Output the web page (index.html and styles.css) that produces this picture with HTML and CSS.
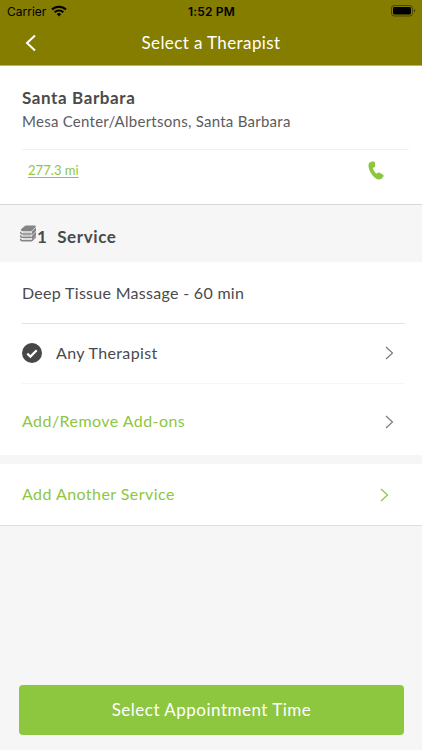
FILE: index.html
```html
<!DOCTYPE html>
<html lang="en">
<head>
  <meta charset="UTF-8">
  <meta name="viewport" content="width=device-width, initial-scale=1.0">
  <title>Select a Therapist</title>
  <link rel="stylesheet" href="styles.css">
</head>
<body>
  <header class="header">
    <div class="status-bar">
      <div class="carrier">
        <span class="carrier-name">Carrier</span>
        <svg class="wifi" width="16" height="12" viewBox="0 0 16 12" fill="none" stroke="#000" stroke-width="2.1">
          <path d="M1 4.6a10 10 0 0 1 14 0M3.7 7.3a6.2 6.2 0 0 1 8.6 0"/>
          <path d="M8 11.4L5.7 9.1a3.3 3.3 0 0 1 4.6 0z" fill="#000" stroke="none"/>
        </svg>
      </div>
      <span class="clock">1:52 PM</span>
      <svg class="battery" width="25" height="12" viewBox="0 0 25 12">
        <rect x="0.5" y="0.5" width="21" height="10.5" rx="2.8" fill="none" stroke="#000" stroke-opacity="0.45"/>
        <rect x="2" y="2" width="18" height="7.5" rx="1.4"/>
        <path d="M23 4v3.6q1.2-.5 1.2-1.8T23 4z" fill-opacity="0.5"/>
      </svg>
    </div>
    <div class="nav-bar">
      <svg class="back" width="12" height="18" viewBox="0 0 12 18" fill="none" stroke="#fff" stroke-width="2">
        <path d="M10 1.5L2 9l8 7.5"/>
      </svg>
      <h1 class="nav-title">Select a Therapist</h1>
    </div>
  </header>

  <section class="location">
    <h2 class="location-name">Santa Barbara</h2>
    <p class="location-address">Mesa Center/Albertsons, Santa Barbara</p>
    <div class="location-links">
      <a class="distance" href="#">277.3 mi</a>
      <svg class="phone" width="16" height="19" viewBox="0 0 16 19" fill="#8dc63f">
        <path d="M1.200 2C2.500.6 4.500.2 5.900.6q1 .3 1.100 1.400l.2 2.900q0 1.400-1.300 1.700-1.100.3-.8 1.500.8 2.600 2.700 4.100.9.600 1.600-.1 1.200-1.100 2.400-.4l3 1.700q1.300.8.600 2.100-1.400 2.900-4.500 3-2.200 0-4.600-2.200Q1.600 11.800.6 6 .2 3.200 1.200 2z"/>
      </svg>
    </div>
  </section>

  <div class="section-head">
    <svg class="towels" width="17" height="18" viewBox="0 0 17 18">
      <path d="M4.500 1.200Q5.200.4 6.200.4H15q1.400.3.600 1.500L12 5.800H1.600Q.2 5.200 1 4.200z" fill="#858585"/>
      <path d="M11.800 6.600L16 2.400v3.500l-4.200 4.400zM11.800 11L16 6.700v3.500l-4.200 4.600z" fill="#858585"/>
      <path d="M1.600 5.500h9.900M11.800 8.900H2Q0 8.200 1.200 7M11.800 12.300H2q-2-.7-.8-1.900M11.800 15.700H2q-2-.7-.8-1.900M11.800 15.700l4-4.200" fill="none" stroke="#858585" stroke-width="1.500"/>
      <path d="M3 7.200h8M3 10.600h8M3 14h8" fill="none" stroke="#b0b0b0" stroke-width="0.700"/>
    </svg>
    <span class="count">1</span>
    <h2 class="section-title">Service</h2>
  </div>

  <section class="service">
    <div class="service-name"><span>Deep Tissue Massage - 60 min</span></div>
    <div class="row therapist">
      <svg class="check" width="20" height="20" viewBox="0 0 20 20">
        <circle cx="10" cy="10" r="10" fill="#474749"/>
        <path d="M5.300 10.600l3.100 3 6.300-6.400" fill="none" stroke="#fff" stroke-width="2.200"/>
      </svg>
      <span class="therapist-name">Any Therapist</span>
      <svg class="chevron" width="9" height="14" viewBox="0 0 9 14"><path d="M1 1l6.500 6L1 13"/></svg>
    </div>
    <div class="row addons">
      <span class="addons-label">Add/Remove Add-ons</span>
      <svg class="chevron" width="9" height="14" viewBox="0 0 9 14"><path d="M1 1l6.500 6L1 13"/></svg>
    </div>
  </section>

  <section class="another">
    <span class="another-label">Add Another Service</span>
    <svg class="chevron chevron-green" width="9" height="14" viewBox="0 0 9 14"><path d="M1 1l6.500 6L1 13"/></svg>
  </section>

  <footer class="footer">
    <button class="select-time" type="button">Select Appointment Time</button>
  </footer>
</body>
</html>
```
FILE: styles.css
```css
* {
  box-sizing: border-box;
}

body {
  display: flex;
  flex-direction: column;
  height: 750px;
  margin: 0;
  overflow: hidden;
  font-family: Lato, sans-serif;
  font-size: 16px;
  letter-spacing: 0.3px;
  color: #4a4a4c;
  background-color: #f6f6f6;
}

h1, h2, p {
  margin: 0;
}

svg {
  display: block;
  flex: none;
}

span, h1, h2, p, a {
  white-space: nowrap;
}

/* Header */
.header {
  height: 66px;
  background-color: #857d00;
  border-bottom: 1px solid #bab560;
}

.status-bar {
  display: grid;
  grid-template-columns: 1fr auto 1fr;
  align-items: center;
  height: 22px;
  padding: 0 6px 0 7px;
  font-family: Inter, sans-serif;
  font-size: 12px;
  color: #000;
}

.carrier {
  display: flex;
  align-items: center;
  gap: 5px;
}

.carrier-name {
  letter-spacing: 0;
}

.wifi {
  margin-top: -1px;
}

.clock {
  font-weight: 600;
  letter-spacing: 0.2px;
}

.battery {
  justify-self: end;
  margin-top: -1px;
}

.nav-bar {
  display: grid;
  grid-template-columns: 1fr auto 1fr;
  align-items: center;
  height: 42px;
  padding: 0 25px;
}

.nav-title {
  font-size: 17px;
  font-weight: 400;
  line-height: 20px;
  letter-spacing: 0.4px;
  color: #fff;
}

/* Location */
.location {
  height: 139px;
  padding: 20px 13px 0 22px;
  background-color: #fff;
  border-bottom: 1px solid #d8d8d8;
}

.location-name {
  font-size: 17px;
  line-height: 24px;
  letter-spacing: 0.6px;
}

.location-address {
  font-size: 15px;
  line-height: 23px;
  letter-spacing: 0.26px;
  color: #5c5c5e;
}

.location-links {
  display: flex;
  justify-content: space-between;
  align-items: center;
  height: 43px;
  margin-top: 16px;
  padding: 0 25px 1px 6px;
  border-top: 1px solid #f0f0f0;
}

.distance {
  margin-top: -2px;
  font-size: 13px;
  letter-spacing: 0.05px;
  color: #8dc63f;
  text-underline-offset: 2px;
}

/* Services */
.section-head {
  display: flex;
  align-items: center;
  height: 57px;
  padding: 6px 20px 0 20px;
  font-size: 17px;
  font-weight: 700;
}

.towels {
  margin-top: -5px;
}

.count {
  margin-right: 10px;
}

.section-title {
  font-size: 17px;
  letter-spacing: 0.6px;
}

.service {
  height: 193px;
  padding: 0 17px 0 22px;
  background-color: #fff;
}

.service-name {
  display: flex;
  align-items: center;
  height: 62px;
  border-bottom: 1px solid #e3e3e3;
}

.row {
  display: flex;
  align-items: center;
  padding-right: 11px;
}

.therapist {
  height: 60px;
  padding-bottom: 2px;
  border-bottom: 1px solid #f5f5f5;
}

.therapist-name {
  margin-left: 14px;
  letter-spacing: 0.37px;
}

.addons {
  height: 71px;
  padding-top: 4px;
}

.addons-label,
.another-label {
  margin-top: -2px;
  letter-spacing: 0.44px;
  color: #8dc63f;
}

.chevron {
  margin-left: auto;
  fill: none;
  stroke: #7c7c7c;
  stroke-width: 1.2;
}

.chevron-green {
  stroke: #8dc63f;
}

.another {
  display: flex;
  align-items: center;
  height: 62px;
  margin-top: 9px;
  padding: 0 33px 0 22px;
  background-color: #fff;
  border-bottom: 1px solid #dedede;
}

/* Footer */
.footer {
  margin-top: auto;
  padding: 0 18px 15px 19px;
}

.select-time {
  display: block;
  width: 100%;
  height: 50px;
  padding-bottom: 3px;
  border: none;
  border-radius: 4px;
  font-family: inherit;
  font-size: 17px;
  letter-spacing: 0.5px;
  color: #fff;
  background-color: #8dc63f;
}
```
